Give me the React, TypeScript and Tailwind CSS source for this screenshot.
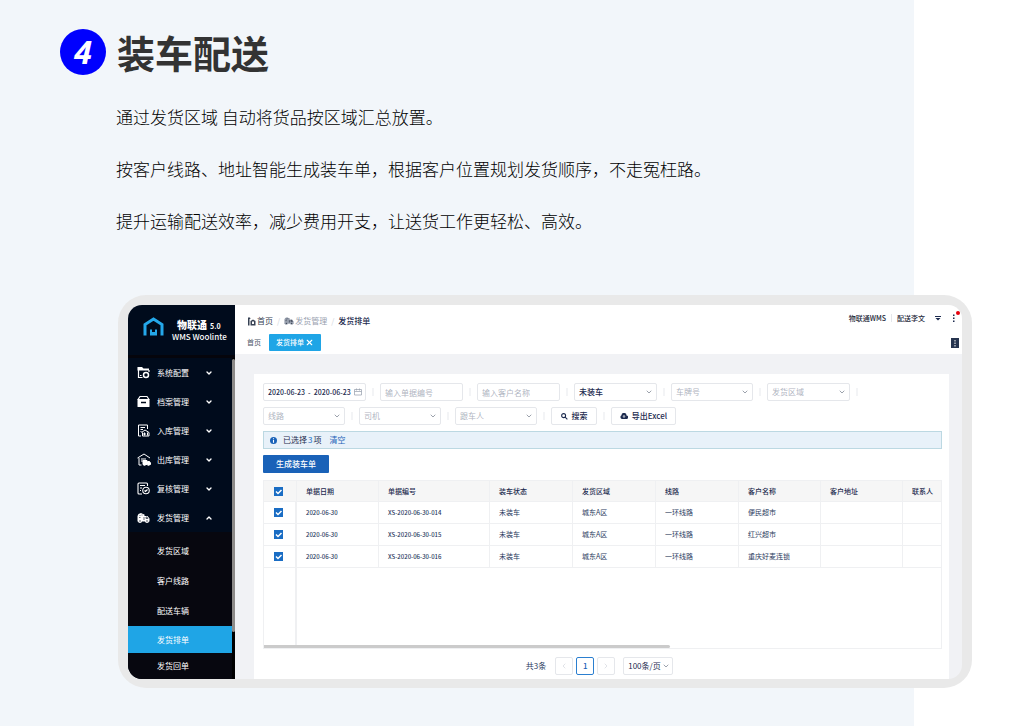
import type { ReactNode } from "react"
import { ChevronDown, ChevronLeft, ChevronRight, ChevronUp, X } from "lucide-react"

const paragraphs = [
  "通过发货区域 自动将货品按区域汇总放置。",
  "按客户线路、地址智能生成装车单，根据客户位置规划发货顺序，不走冤枉路。",
  "提升运输配送效率，减少费用开支，让送货工作更轻松、高效。",
]

const subMenu = ["发货区域", "客户线路", "配送车辆"]

const columns = [
  "单据日期",
  "单据编号",
  "装车状态",
  "发货区域",
  "线路",
  "客户名称",
  "客户地址",
  "联系人",
]

const rows = [
  { date: "2020-06-30", no: "XS-2020-06-30-014", customer: "便民超市" },
  { date: "2020-06-30", no: "XS-2020-06-30-015", customer: "红兴超市" },
  { date: "2020-06-30", no: "XS-2020-06-30-016", customer: "重庆好麦连锁" },
]

function TruckIcon({ className }: { className?: string }) {
  return (
    <svg viewBox="0 0 26 20" className={className} fill="currentColor">
      <path d="M1 6 3 2l5-2 4 2 3 1v3h6l4 5v6H1z" />
      <circle cx="6" cy="16" r="4" />
      <circle cx="20" cy="16" r="4" />
      <path
        d="M5 5h2M9 4h2M4 9h3M14 8v6M18 8h2l2 3h-4z"
        fill="none"
        stroke="#000b1c"
        strokeWidth="1.2"
      />
      <circle cx="6" cy="16" r="1.3" fill="#000b1c" />
      <circle cx="20" cy="16" r="1.3" fill="#000b1c" />
    </svg>
  )
}

function ConfigIcon() {
  return (
    <svg viewBox="0 0 26 26" className="size-[13px]" fill="none" stroke="white" strokeWidth="2.4">
      <path d="M11 23H3V3" />
      <path d="M1 2h9l3 3h11v4H1z" fill="white" stroke="none" />
      <path d="M24 8v4" />
      <circle cx="18" cy="18" r="5" strokeWidth="3" />
      <path d="M6 19h3" />
    </svg>
  )
}

function ArchiveIcon() {
  return (
    <svg viewBox="0 0 26 26" className="size-[13px]" fill="none" stroke="white" strokeWidth="2.4">
      <path d="M6 3h14l4 6H2z" />
      <rect x="1" y="10" width="24" height="14" rx="1" fill="white" stroke="none" />
      <path d="M8 15h10" stroke="#000b1c" strokeWidth="2.6" />
    </svg>
  )
}

function InboundIcon() {
  return (
    <svg viewBox="0 0 26 26" className="size-[13px]" fill="none" stroke="white" strokeWidth="2">
      <path d="M8 24H3V2h18v8" />
      <path d="M7 7h9M7 11h5M7 15h2" />
      <path d="m9 17 7-5 8 5v7H11v-7" />
      <path d="M12 20h6M15 17v6M21 17v6" />
    </svg>
  )
}

function OutboundIcon() {
  return (
    <svg viewBox="0 0 28 26" className="h-[13px] w-[14px]" fill="none" stroke="white" strokeWidth="2">
      <path d="M1 10 14 2l12 8M4 10v14h5" />
      <path d="M8 12h10M8 16h4" />
      <path d="M12 15h8v8h-8zM21 17h4l2 3v3h-6z" fill="white" />
      <circle cx="15" cy="24" r="1.5" />
      <circle cx="23" cy="24" r="1.5" />
    </svg>
  )
}

function ReviewIcon() {
  return (
    <svg viewBox="0 0 26 26" className="size-[13px]" fill="none" stroke="white" strokeWidth="2.2">
      <path d="M10 24H4q-2 0-2-2V4q0-2 2-2h15q2 0 2 2v4" />
      <path d="M6 7h10M6 12h4M6 17h2" />
      <circle cx="18" cy="17" r="6.5" />
      <path d="m15 17 2 2 4-4" />
    </svg>
  )
}

const menu: { name: string; icon: ReactNode; open?: boolean }[] = [
  { name: "系统配置", icon: <ConfigIcon /> },
  { name: "档案管理", icon: <ArchiveIcon /> },
  { name: "入库管理", icon: <InboundIcon /> },
  { name: "出库管理", icon: <OutboundIcon /> },
  { name: "复核管理", icon: <ReviewIcon /> },
  { name: "发货管理", icon: <TruckIcon className="h-[10px] w-[13px]" />, open: true },
]

function Sidebar() {
  return (
    <aside className="flex w-[107px] shrink-0 flex-col bg-[#000b1c] text-white">
      <div className="flex h-[50px] items-center gap-2 pl-[15px]">
        <svg viewBox="0 0 42 38" className="mb-2 h-[19px] w-[21px] shrink-0">
          <path d="M4 37V15L21 4l17 11v22" fill="none" stroke="#24a8ea" strokeWidth="6" />
          <path d="M14 37V25h4v5h6v-5h4v12z" fill="#24a8ea" />
        </svg>
        <div className="whitespace-nowrap">
          <div className="flex items-end gap-[3px] pl-[5px] leading-3">
            <span className="text-[10px] font-black">物联通</span>
            <span className="text-[7px] leading-[9px] font-bold">5.0</span>
          </div>
          <div className="text-[8px] leading-[11px] font-medium">WMS Woolinte</div>
        </div>
      </div>
      <div className="h-[3px] bg-[#05050c]" />
      <div className="flex flex-1">
        <nav className="flex flex-1 flex-col">
          {menu.map((item) => (
            <button key={item.name} className="flex h-[29px] items-center pl-[9px] text-[8px]">
              <span className="w-5">{item.icon}</span>
              <span className="w-12 text-left">{item.name}</span>
              {item.open ? (
                <ChevronUp className="size-2" strokeWidth={4} />
              ) : (
                <ChevronDown className="size-2" strokeWidth={4} />
              )}
            </button>
          ))}
          <div className="flex flex-1 flex-col bg-[#07070f] pt-1 text-[8px]">
            {subMenu.map((name) => (
              <a key={name} href="#" className="flex h-[30px] items-center pl-[29px]">
                {name}
              </a>
            ))}
            <a href="#" className="flex h-[27px] items-center bg-[#1fa5e6] pl-[29px]">
              发货排单
            </a>
            <a href="#" className="flex h-[26px] items-center pl-[29px]">
              发货回单
            </a>
          </div>
        </nav>
        <div className="w-[3px] bg-black pt-px">
          <div className="h-[273px] rounded-full bg-[#8d8b89]" />
        </div>
      </div>
    </aside>
  )
}

function TopBar() {
  return (
    <header className="bg-white pb-[3px] pl-3">
      <div className="flex h-[29px] items-center justify-between">
        <nav className="flex items-center pt-[3px] text-[8px] text-gray-400">
          <a href="#" className="flex items-center gap-px text-gray-700">
            <svg viewBox="0 0 18 18" className="size-[9px]" fill="currentColor">
              <path d="M2 1h4l1 3H5v13H2zM7 8l5-3 5 3v9H7zM10 9v5h4V9z" fillRule="evenodd" />
            </svg>
            首页
          </a>
          <span className="px-1 text-gray-300">/</span>
          <a href="#" className="flex items-center gap-px">
            <TruckIcon className="h-2 w-[10px]" />
            发货管理
          </a>
          <span className="px-1 text-gray-300">/</span>
          <span className="font-medium text-[#1d2b4f]">发货排单</span>
        </nav>
        <div className="relative flex items-center pr-[5px] pb-[3px] text-[7px] font-medium text-gray-800">
          <span>物联通WMS</span>
          <span className="mx-[5px] h-2 w-px bg-gray-200" />
          <span>配送李文</span>
          <svg viewBox="0 0 12 10" className="mx-[10px] h-[5px] w-[6px]" fill="#1d2b4f">
            <path d="M0 0h12v2H0zM1 4h10L6 9z" />
          </svg>
          <svg viewBox="0 0 6 18" className="h-[9px] w-[6px]" fill="#1d2b4f">
            <path d="M1 1h3v3H1zM1 7h3v3H1zM1 13h3v3H1z" />
          </svg>
          <span className="absolute -top-[2px] right-[2px] size-1 rounded-full bg-red-600" />
        </div>
      </div>
      <div className="flex h-[17px] items-center pr-[3px] text-[7px]">
        <a href="#" className="text-gray-600">
          首页
        </a>
        <a
          href="#"
          className="ml-2 flex h-full w-[52px] items-center justify-center gap-px rounded-[1px] bg-[#1fa5e6] font-medium text-white"
        >
          发货排单
          <X className="size-[9px]" strokeWidth={3} />
        </a>
        <button aria-label="更多" className="ml-auto grid h-[10px] w-2 place-items-center bg-[#26344f]">
          <svg viewBox="0 0 4 16" className="h-2 w-[2px]" fill="white">
            <path d="M1 2h2v3H1zM1 7h2v3H1zM1 12h2v3H1z" />
          </svg>
        </button>
      </div>
    </header>
  )
}

const field =
  "block h-[18px] w-full appearance-none rounded-[2px] border border-gray-200 bg-white pl-1 text-[8px] leading-4 outline-none placeholder:text-gray-400/80"

function Divider() {
  return <span className="mx-[6px] h-2 w-[2px] shrink-0 bg-gray-100" />
}

function Select({ label, filled, narrow }: { label: string; filled?: boolean; narrow?: boolean }) {
  return (
    <div className={narrow ? "relative w-[82px]" : "relative w-[83px]"}>
      <select
        aria-label={label}
        className={filled ? `${field} font-medium text-[#1d2b4f]` : `${field} text-gray-400/80`}
      >
        <option>{label}</option>
      </select>
      <ChevronDown className="pointer-events-none absolute top-[5px] right-1 size-2 text-gray-500" />
    </div>
  )
}

function Filters() {
  return (
    <form className="flex flex-col gap-[6px]">
      <div className="flex items-center">
        <div className="relative w-[103px]">
          <input
            aria-label="日期"
            defaultValue="2020-06-23  -  2020-06-23"
            className="block h-[18px] w-full rounded-[2px] border border-gray-200 bg-white pl-1 text-[7px] font-medium whitespace-pre text-[#1d2b4f] outline-none"
          />
          <svg
            viewBox="0 0 16 16"
            className="pointer-events-none absolute top-[5px] right-1 size-2 text-gray-400"
            fill="none"
            stroke="currentColor"
            strokeWidth="1.5"
          >
            <path d="M1 3h14v11H1zM1 7h14M5 1v4M11 1v4" />
          </svg>
        </div>
        <Divider />
        <div className="w-[83px]">
          <input aria-label="单据编号" placeholder="输入单据编号" className={field} />
        </div>
        <Divider />
        <div className="w-[83px]">
          <input aria-label="客户名称" placeholder="输入客户名称" className={field} />
        </div>
        <Divider />
        <Select label="未装车" filled />
        <Divider />
        <Select label="车牌号" narrow />
        <Divider />
        <Select label="发货区域" />
        <Divider />
      </div>
      <div className="flex items-center">
        <Select label="线路" narrow />
        <Divider />
        <Select label="司机" narrow />
        <Divider />
        <Select label="跟车人" narrow />
        <Divider />
        <button
          type="button"
          className="flex h-[18px] w-[46px] items-center justify-center gap-1 rounded-[2px] border border-gray-200 text-[8px] font-medium text-[#1d2b4f]"
        >
          <svg viewBox="0 0 16 16" className="size-[7px]" fill="none" stroke="currentColor" strokeWidth="2.5">
            <circle cx="6" cy="6" r="4.5" />
            <path d="m9.5 9.5 5 5" />
          </svg>
          搜索
        </button>
        <Divider />
        <button
          type="button"
          className="flex h-[18px] w-[65px] items-center justify-center gap-1 rounded-[2px] border border-gray-200 text-[8px] font-medium text-[#1d2b4f]"
        >
          <svg viewBox="0 0 16 12" className="h-[6px] w-2" fill="currentColor">
            <path d="M4 12a4 4 0 0 1-1-7.5A5 5 0 0 1 13 5a3.500 3.500 0 0 1 0 7z" />
            <path d="M8 5v5M6 7.500 8 5l2 2.500" fill="none" stroke="white" strokeWidth="1.4" />
          </svg>
          导出Excel
        </button>
      </div>
    </form>
  )
}

function Check({ label }: { label: string }) {
  return (
    <label className="relative ml-[10px] block size-[9px]">
      <input
        type="checkbox"
        aria-label={label}
        defaultChecked
        className="peer block size-[9px] appearance-none border border-[#1a6dc4] checked:bg-[#1a6dc4]"
      />
      <svg
        viewBox="0 0 18 18"
        className="pointer-events-none absolute inset-0 hidden size-[9px] peer-checked:block"
        fill="none"
        stroke="white"
        strokeWidth="3"
      >
        <path d="m4 9 4 4 7-7" />
      </svg>
    </label>
  )
}

function OrderTable() {
  const cell = "h-[22px] border-r border-b border-[#eff0f2] pl-[9px]"

  return (
    <div className="mt-[7px] flex h-[169px] flex-col border border-[#eff0f2]">
      <table className="w-full table-fixed border-separate border-spacing-0 text-left text-[7px] whitespace-nowrap text-[#2a3a60]">
        <colgroup>
          <col className="w-[33px]" />
          <col className="w-[82px]" />
          <col className="w-[111px]" />
          <col className="w-[83px]" />
          <col className="w-[83px]" />
          <col className="w-[83px]" />
          <col className="w-[82px]" />
          <col className="w-[82px]" />
          <col />
        </colgroup>
        <thead className="bg-[#f6f6f6]">
          <tr>
            <th className="h-[21px] border-r border-b border-[#eff0f2]">
              <Check label="全选" />
            </th>
            {columns.map((name) => (
              <th
                key={name}
                className="h-[21px] border-r border-b border-[#eff0f2] pl-[9px] font-medium text-[#1d2b4f] last:border-r-0"
              >
                {name}
              </th>
            ))}
          </tr>
        </thead>
        <tbody>
          {rows.map((row) => (
            <tr key={row.no}>
              <td className="h-[22px] border-r-2 border-b border-[#eff0f2]">
                <Check label={row.no} />
              </td>
              <td className={`${cell} text-[6px] font-medium`}>{row.date}</td>
              <td className={`${cell} text-[6px] font-medium`}>{row.no}</td>
              <td className={cell}>未装车</td>
              <td className={cell}>城东A区</td>
              <td className={cell}>一环线路</td>
              <td className={cell}>{row.customer}</td>
              <td className={cell} />
              <td className="border-b border-[#eff0f2]" />
            </tr>
          ))}
        </tbody>
      </table>
      <div className="w-[33px] flex-1 border-r-2 border-[#eff0f2]" />
      <div className="h-[3px] w-3/5 rounded-r-full bg-[#cbcbcb]" />
    </div>
  )
}

function Pagination() {
  return (
    <div className="mt-2 flex items-center justify-center pr-[6px] pb-1 text-[8px] text-[#2a3a60]">
      <span className="mr-[9px]">共3条</span>
      <button
        aria-label="上一页"
        className="grid size-[18px] place-items-center rounded-[2px] border border-gray-200 text-gray-300"
      >
        <ChevronLeft className="size-2" />
      </button>
      <button className="mx-[3px] grid size-[18px] place-items-center rounded-[2px] border border-[#2b7fd0] font-medium text-[#1a62b8]">
        1
      </button>
      <button
        aria-label="下一页"
        className="grid size-[18px] place-items-center rounded-[2px] border border-gray-200 text-gray-300"
      >
        <ChevronRight className="size-2" />
      </button>
      <div className="relative ml-2 w-[50px]">
        <select aria-label="每页条数" className={`${field} text-[#1d2b4f]`}>
          <option>100条/页</option>
        </select>
        <ChevronDown className="pointer-events-none absolute top-[5px] right-[3px] size-2 text-gray-500" />
      </div>
    </div>
  )
}

export default function App() {
  return (
    <main className="min-h-screen bg-[linear-gradient(to_right,#f2f6fa_88.3%,white_88.3%)] pt-[29px] pb-[38px] font-['Noto_Sans_CJK_SC',sans-serif]">
      <div className="flex h-[46px] items-center gap-[11px] pl-[60px]">
        <span className="grid size-[46px] place-items-center rounded-full bg-[#0000fe] font-['Open_Sans',sans-serif] text-[32px] leading-none font-bold text-white italic">
          4
        </span>
        <h1 className="text-[38px] leading-none font-bold text-[#333333]">装车配送</h1>
      </div>
      <div className="mt-4 pr-4 pl-[116px] text-[17px] leading-[52px] font-light text-black">
        {paragraphs.map((text) => (
          <p key={text}>{text}</p>
        ))}
      </div>
      <section className="mt-12 mr-[63px] ml-[118px] rounded-[28px] bg-[#e9e9e9] px-[10px] pt-[10px] pb-[9px]">
        <div className="flex overflow-hidden rounded-[14px] bg-[#f1f2f5]">
          <Sidebar />
          <div className="flex min-w-0 flex-1 flex-col">
            <TopBar />
            <div className="mt-5 mr-[13px] ml-[19px] flex-1 bg-white pt-[9px] pr-[7px] pl-[9px]">
              <Filters />
              <div className="mt-[6px] flex h-[18px] items-center border border-[#bcd8e2] bg-[#e8f1f9] pl-[6px] text-[8px] text-[#1d2b4f]">
                <svg viewBox="0 0 16 16" className="mr-[6px] size-[7px]">
                  <circle cx="8" cy="8" r="8" fill="#1a62b8" />
                  <path d="M8 3v2M8 7v6" stroke="white" strokeWidth="2.5" />
                </svg>
                已选择<span className="px-px text-[#1a6dc4]">3</span>项
                <button className="ml-2 text-[#1a62b8]">清空</button>
              </div>
              <button className="mt-[6px] block h-[18px] w-[66px] rounded-[1px] bg-[#1a62b8] text-[8px] font-medium text-white">
                生成装车单
              </button>
              <OrderTable />
              <Pagination />
            </div>
          </div>
        </div>
      </section>
    </main>
  )
}
